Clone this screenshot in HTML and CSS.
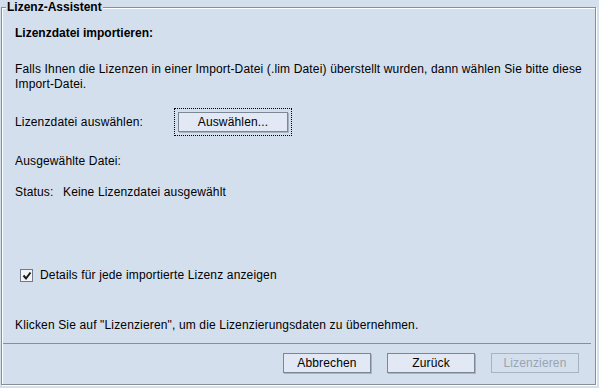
FILE: index.html
```html
<!DOCTYPE html>
<html>

<head>
    <meta charset="UTF-8">
    <title>Lizenz-Assistent</title>
    <link rel="stylesheet" href="styles.css">
</head>

<body>
    <fieldset class="wizard">
        <legend class="wizard-title">Lizenz-Assistent</legend>

        <div class="content">
            <div class="heading">Lizenzdatei importieren:</div>

            <p class="intro">Falls Ihnen die Lizenzen in einer Import-Datei (.lim Datei) überstellt wurden, dann wählen Sie bitte diese Import-Datei.</p>

            <div class="pick-row">
                <span class="pick-label">Lizenzdatei auswählen:</span>
                <div class="focus-box">
                    <button class="btn btn-pick">Auswählen...</button>
                </div>
            </div>

            <div class="line selected">Ausgewählte Datei:</div>
            <div class="line status"><span class="status-label">Status:</span>Keine Lizenzdatei ausgewählt</div>

            <label class="check-row">
                <span class="check-box">
                    <svg width="10" height="10" viewBox="0 0 10 10">
                        <path d="M1.5 4.5 L4 7.5 L8.5 1.5" fill="none" stroke="#1a1a1a" stroke-width="2"/>
                    </svg>
                </span>
                Details für jede importierte Lizenz anzeigen
            </label>

            <div class="line hint">Klicken Sie auf "Lizenzieren", um die Lizenzierungsdaten zu übernehmen.</div>
        </div>

        <div class="separator"></div>

        <div class="buttons">
            <button class="btn">Abbrechen</button>
            <button class="btn">Zurück</button>
            <button class="btn" disabled>Lizenzieren</button>
        </div>
    </fieldset>
</body>

</html>
```

FILE: styles.css
```css
* {
    margin: 0;
    padding: 0;
    box-sizing: border-box;
}

body {
    background-color: #d4dfee;
    font-family: "Liberation Sans", Arial, sans-serif;
    font-size: 12px;
    letter-spacing: 0.15px;
    color: #000;
    width: 599px;
    height: 388px;
    overflow: hidden;
}

.wizard {
    width: 595px;
    height: 385px;
    margin-left: 1px;
    border: 1px solid #8a8d91;
    box-shadow: 1px 1px 0 #fff, inset 1px 1px 0 #fff;
    display: flex;
    flex-direction: column;
}

.wizard-title {
    font-weight: bold;
    font-size: 12px;
    letter-spacing: 0;
    line-height: 15px;
    margin-left: 4px;
    padding: 0 1px;
    background-color: #d4dfee;
}

.content {
    padding: 11px 0 0 13px;
    line-height: 15px;
}

.heading {
    font-weight: bold;
    letter-spacing: 0;
}

.intro {
    margin-top: 21px;
    width: 580px;
}

.pick-row {
    display: flex;
    align-items: center;
    margin-top: 16px;
    height: 28px;
}

.pick-label {
    width: 159px;
}

.focus-box {
    border: 1px dotted #000;
    padding: 3px;
}

.btn {
    font-family: "Liberation Sans", Arial, sans-serif;
    font-size: 12px;
    letter-spacing: 0.15px;
    color: #000;
    height: 20px;
    background-color: #e2e8f4;
    border: 1px solid #7c8796;
    box-shadow: 1px 1px 0 #a9b3c2;
}

.btn-pick {
    width: 110px;
    display: block;
}

.btn:disabled {
    color: #9aa3b0;
    border-color: #a9b2bf;
    background-color: #d4dfee;
    box-shadow: none;
}

.selected {
    margin-top: 18px;
}

.status {
    margin-top: 16px;
}

.status-label {
    display: inline-block;
    width: 48px;
}

.check-row {
    display: flex;
    align-items: center;
    margin-top: 68px;
    margin-left: 5px;
    height: 15px;
}

.check-box {
    width: 13px;
    height: 13px;
    border: 1px solid #6f7a88;
    background-color: #f2f4f8;
    margin-right: 7px;
    display: flex;
    align-items: center;
    justify-content: center;
}

.hint {
    margin-top: 35px;
}

.separator {
    height: 1px;
    background-color: #8a8d91;
    margin: 10px 4px 0 1px;
}

.buttons {
    display: flex;
    justify-content: flex-end;
    gap: 16px;
    padding: 9px 16px 0 0;
}

.buttons .btn {
    width: 88px;
}
```
